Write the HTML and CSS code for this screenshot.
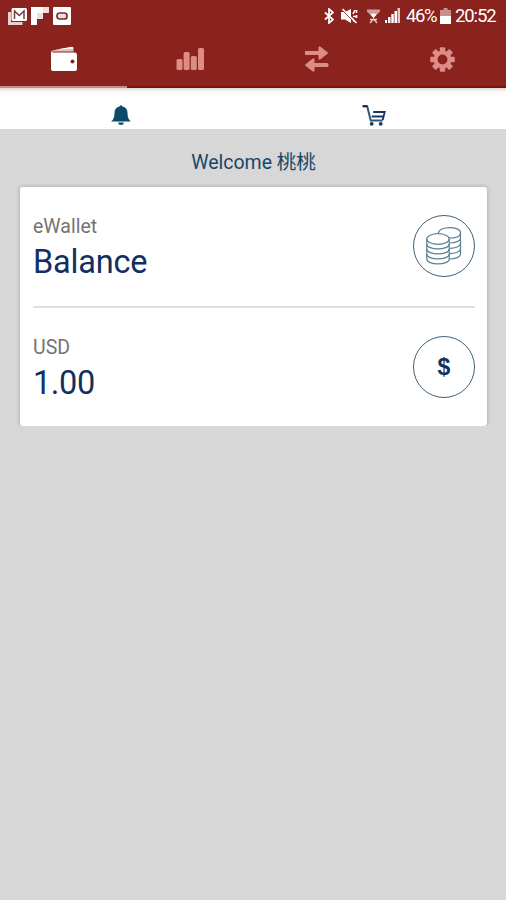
FILE: index.html
```
<!DOCTYPE html>
<html lang="en">
<head>
  <meta charset="UTF-8">
  <meta name="viewport" content="width=device-width, initial-scale=1.0">
  <title>eWallet</title>
  <link rel="stylesheet" href="styles.css">
</head>
<body>

  <header class="header">
    <div class="status-bar">
      <div class="notifications">
        <svg width="19" height="18" viewBox="0 0 19 18">
          <path d="M1.500 5v11.500h13" fill="none" stroke="#e9cfcd" stroke-width="3"/>
          <rect x="3.500" y="1" width="15.500" height="13" rx="1.500" fill="#fff"/>
          <path d="M6.500 12V4l4.800 4.500L16 4v8" fill="none" stroke="#7c3a37" stroke-width="1.500"/>
        </svg>
        <svg width="18" height="18" viewBox="0 0 18 18">
          <path d="M0 0h18v6h-6v6H6v6H0z" fill="#fff"/>
          <path d="M6 6h6v6H6zM12 0h6v6h-6z" fill="#f0dedd"/>
        </svg>
        <svg width="18" height="18" viewBox="0 0 18 18">
          <rect width="18" height="18" rx="1" fill="#fff"/>
          <rect x="4" y="6" width="10" height="6" rx="2.500" fill="#f0dedd" stroke="#7c2a27" stroke-width="1.700"/>
        </svg>
      </div>
      <div class="system">
        <svg class="bluetooth" width="10" height="16" viewBox="0 0 10 16">
          <path d="M1 4.500l8 7-4 3.500V1l4 3.500-8 7" fill="none" stroke="#fff" stroke-width="1.700"/>
        </svg>
        <svg class="mute" width="17" height="16" viewBox="0 0 17 16">
          <path d="M0 4h4l6-3v14l-6-3.500H0z" fill="#fff"/>
          <path d="M0 1l14 14" stroke="#8a221d" stroke-width="1"/>
          <path d="M1.500 1l14 14" stroke="#fff" stroke-width="1.600"/>
          <path d="M12 6l2-4M12 8.500h3M15.500 2v3M15.500 7v3M12 11l1.500 3" stroke="#fff" stroke-width="1.600"/>
        </svg>
        <svg class="wifi" width="13" height="16" viewBox="0 0 13 16">
          <path d="M0 1.500h13v2L6.500 10 0 3.500z" fill="#d49b97"/>
          <path d="M3.500 6.500q3-2 6 0l-3 3.500z" fill="#fff"/>
          <path d="M3 15l3.500-4 3.500 4M3 11.500h7" fill="none" stroke="#e9cfcd" stroke-width="1.300"/>
        </svg>
        <svg class="signal" width="15" height="15" viewBox="0 0 15 15">
          <path d="M0 12h2v3H0zM3 9h2.500v6H3zM6.300 6h2.500v9H6.300zM9.500 3H12v12H9.500z" fill="#fff"/>
          <path d="M12.500 0H15v15h-2.500z" fill="#e6c6c4"/>
        </svg>
        <span class="percent">46%</span>
        <svg class="battery" width="11" height="16" viewBox="0 0 11 16">
          <path d="M3.500 0h4v2H11v6H0V2h3.500z" fill="#c98f8b"/>
          <path d="M0 8h11v8H0z" fill="#fff"/>
        </svg>
        <span class="clock">20:52</span>
      </div>
    </div>

    <nav class="tabs">
      <a class="tab active">
        <svg width="26" height="26" viewBox="0 0 26 26">
          <path d="M1 4.500L21 1q1.500 0 1.500 2v2.500H1z" fill="#e3bebb"/>
          <path d="M4 3.800l17-3q1.500 0 1.500 1.700z" fill="#fff"/>
          <path d="M0 5q1 1.500 3 1.500h20.500Q26 6.500 26 9v14q0 2-2 2H2q-2 0-2-2z" fill="#fff"/>
          <circle cx="21.500" cy="15.500" r="2" fill="#8a221d"/>
        </svg>
      </a>
      <a class="tab">
        <svg width="28" height="22" viewBox="0 0 28 22">
          <rect x="0.500" y="11" width="6" height="11" rx="1.500"/>
          <rect x="7.600" y="4" width="6" height="18" rx="1.500"/>
          <rect x="14.800" y="8" width="6" height="14" rx="1.500"/>
          <rect x="22" y="0" width="6" height="22" rx="1.500"/>
        </svg>
      </a>
      <a class="tab">
        <svg width="24" height="26" viewBox="0.500 0 24 26">
          <path d="M1.500 5H14V1.500q0-2.200 2-.8l7 5.500q1 .8 0 1.600l-7 5.500q-2 1.200-2-.8V9H1.500Q0 9 0 7.500v-1Q0 5 1.500 5z"/>
          <path d="M22.500 17H10v-3.500q0-2.200-2-.8l-7 5.500q-1 .8 0 1.600l7 5.500q2 1.200 2-.8V21h12.500q1.500 0 1.500-1.500v-1q0-1.500-1.500-1.500z"/>
        </svg>
      </a>
      <a class="tab">
        <svg width="25" height="25" viewBox="-12.500 -12.500 25 25">
          <g id="teeth">
            <rect x="-2.700" y="-12.300" width="5.400" height="24.600" rx="1"/>
            <rect x="-12.300" y="-2.700" width="24.600" height="5.400" rx="1"/>
          </g>
          <use href="#teeth" transform="rotate(45)"/>
          <circle r="9"/>
          <circle r="4.900" fill="#8a221d"/>
        </svg>
      </a>
    </nav>
  </header>

  <div class="toolbar">
    <a class="tool">
      <svg width="20" height="20" viewBox="0 0 20 20">
        <path d="M8.500 1.500Q10-.8 11.500 1.500q5 1 5 6.500 0 6.500 3.500 8.500H0Q3.500 14.500 3.500 8q0-5.500 5-6.500z" fill="#0b4a68"/>
        <path d="M7 17.500h6Q12.500 20 10 20t-3-2.500z" fill="#0b4a68"/>
      </svg>
    </a>
    <a class="tool">
      <svg width="24" height="21" viewBox="-0.700 0 24 21">
        <path d="M0 1.200h4.500L8 15.500h12" fill="none" stroke="#2b5a7d" stroke-width="2"/>
        <path d="M0 1.200h4.500" stroke="#17254f" stroke-width="2"/>
        <path d="M10.500 7H22l-2 8M9 11.500h12" fill="none" stroke="#17355f" stroke-width="1.800"/>
        <circle cx="9" cy="18.800" r="1.900" fill="#143a62"/>
        <circle cx="18" cy="18.800" r="1.900" fill="#143a62"/>
      </svg>
    </a>
  </div>

  <main class="content">
    <p class="welcome">Welcome 桃桃</p>

    <div class="card">
      <div class="row">
        <div class="text">
          <div class="label">eWallet</div>
          <div class="value">Balance</div>
        </div>
        <div class="circle">
          <svg width="36" height="38" viewBox="0 0 36 38" fill="none" stroke="#5b8195" stroke-width="1.200">
            <path d="M12.500 6C12.500-1 34.500-1 34.500 5.500S24 11 23 10.500"/>
            <path d="M34.500 6v21c0 3-5 5-11 5M34.500 11c0 3-5 5-11 5M34.500 16.300c0 3-5 5-11 5M34.500 21.600c0 3-5 5-11 5"/>
            <ellipse cx="12" cy="12" rx="11.200" ry="5.300"/>
            <path d="M.8 12v20c0 6.500 22.400 6.500 22.400 0V12"/>
            <path d="M.8 17c0 6.500 22.400 6.500 22.400 0M.8 22c0 6.500 22.400 6.500 22.400 0M.8 27c0 6.500 22.400 6.500 22.400 0"/>
          </svg>
        </div>
      </div>
      <div class="row">
        <div class="text">
          <div class="label">USD</div>
          <div class="value amount">1.00</div>
        </div>
        <div class="circle dollar">$</div>
      </div>
    </div>
  </main>

</body>
</html>
```
FILE: styles.css
```
body {
  font-family: Roboto, "Noto Sans CJK SC", sans-serif;
  background-color: #d7d7d7;
  margin: 0;
}

svg {
  display: block;
}

.header {
  background-color: #8a221d;
  color: white;
  height: 88px;
}

.status-bar {
  display: flex;
  justify-content: space-between;
  height: 31px;
  padding: 0 10px 1px 8px;
}

.notifications {
  display: flex;
  align-items: center;
  gap: 4px;
}

.system {
  display: flex;
  align-items: center;
  font-size: 18.5px;
}

.mute {
  margin-left: 7px;
}

.wifi {
  margin-left: 9px;
}

.signal {
  margin-left: 5px;
}

.percent {
  width: 30px;
  margin-left: 6px;
  letter-spacing: -1.4px;
}

.battery {
  margin-left: 4px;
}

.clock {
  width: 41px;
  margin-left: 4px;
  letter-spacing: -1.1px;
}

.tabs {
  display: flex;
  height: 56px;
}

.tab {
  flex: 1;
  display: flex;
  align-items: center;
  justify-content: center;
  box-sizing: border-box;
  border-bottom: 2px solid #7e0f0c;
  fill: #dd8c86;
}

.tab.active {
  padding-left: 1px;
  border-bottom-color: #c98f86;
}

.toolbar {
  display: flex;
  height: 41px;
  background: linear-gradient(#dcd8d2, #f8f7f5 3px, white 7px);
}

.tool {
  flex: 1;
  display: flex;
  justify-content: center;
  padding: 17px 11px 0 0;
}

.content {
  padding: 20px 19px 0 20px;
}

.welcome {
  margin: 0 0 10px;
  height: 28px;
  line-height: 28px;
  text-align: center;
  font-size: 19.5px;
  color: #174766;
}

.card {
  background-color: white;
  border-radius: 3px;
  padding: 0 12px 0 13px;
  box-shadow: 0 0 4px rgba(0, 0, 0, 0.25);
}

.row {
  display: flex;
  align-items: center;
  justify-content: space-between;
  box-sizing: border-box;
  height: 119px;
  padding-bottom: 1px;
}

.row + .row {
  height: 120px;
  border-top: 2px solid #dfdfdf;
}

.text {
  padding-top: 8px;
}

.label {
  font-size: 19.5px;
  line-height: 24px;
  color: #747474;
}

.value {
  font-size: 32.5px;
  line-height: 46px;
  letter-spacing: -0.2px;
  color: #12305f;
}

.amount {
  letter-spacing: -0.4px;
}

.circle {
  display: flex;
  align-items: center;
  justify-content: center;
  box-sizing: border-box;
  width: 62px;
  height: 62px;
  border: 1.500px solid #3d6079;
  border-radius: 50%;
}

.dollar {
  padding-top: 2px;
  font-family: "Liberation Sans", Arial, sans-serif;
  font-size: 23px;
  font-weight: bold;
  color: #12305f;
}
```
